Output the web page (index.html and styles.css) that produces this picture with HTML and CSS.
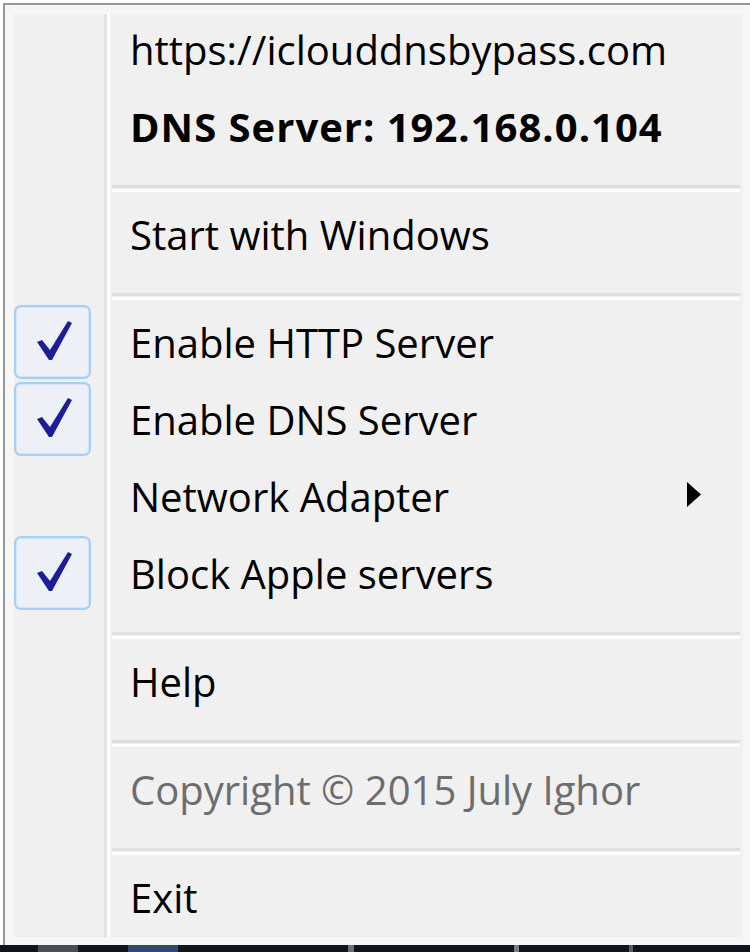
FILE: index.html
```html
<!DOCTYPE html>
<html>
<head>
<meta charset="utf-8">
<link rel="stylesheet" href="styles.css">
</head>
<body>
<div class="screen">
  <div class="frame">
    <div class="menu">
      <div class="row"><span class="label">https://iclouddnsbypass.com</span></div>
      <div class="row"><span class="label bold">DNS Server: 192.168.0.104</span></div>
      <div class="sep"></div>
      <div class="row"><span class="label">Start with Windows</span></div>
      <div class="sep"></div>
      <div class="row checked">
        <span class="box"><svg viewBox="0 0 73 70" width="73" height="70"><polygon class="tick" points="21,35 26,33 34,43 52,14 56,16 36,53 33,53"/></svg></span>
        <span class="label">Enable HTTP Server</span>
      </div>
      <div class="row checked">
        <span class="box"><svg viewBox="0 0 73 70" width="73" height="70"><polygon class="tick" points="21,35 26,33 34,43 52,14 56,16 36,53 33,53"/></svg></span>
        <span class="label">Enable DNS Server</span>
      </div>
      <div class="row">
        <span class="label">Network Adapter</span>
        <svg class="arrow" viewBox="0 0 14 25" width="14" height="25"><polygon points="0,0 14,12.5 0,25"/></svg>
      </div>
      <div class="row checked">
        <span class="box"><svg viewBox="0 0 73 70" width="73" height="70"><polygon class="tick" points="21,35 26,33 34,43 52,14 56,16 36,53 33,53"/></svg></span>
        <span class="label">Block Apple servers</span>
      </div>
      <div class="sep"></div>
      <div class="row"><span class="label">Help</span></div>
      <div class="sep"></div>
      <div class="row"><span class="label disabled">Copyright © 2015 July Ighor</span></div>
      <div class="sep"></div>
      <div class="row"><span class="label">Exit</span></div>
    </div>
  </div>
  <div class="taskbar">
    <span class="tb tb1"></span><span class="tb tb2"></span><span class="tb tb3"></span><span class="tb tb4"></span><span class="tb tb5"></span>
  </div>
</div>
</body>
</html>
```

FILE: styles.css
```css
html, body {
  margin: 0;
  padding: 0;
  background: #ffffff;
}
.screen {
  width: 750px;
  height: 952px;
  display: flex;
  flex-direction: column;
  overflow: hidden;
  background: #ffffff;
}
.frame {
  margin: 3px 0 0 3px;
  border-left: 2px solid #979797;
  border-top: 2px solid #979797;
  background: #f6f6f6;
  padding: 9px 7px 8px 9px;
}
.menu {
  height: 923px;
  overflow: hidden;
  padding-top: 1px;
  box-sizing: border-box;
  background: linear-gradient(to right,
    #f0f0f0 0px, #f0f0f0 90px,
    #e2e3e3 90px, #e2e3e3 93px,
    #ffffff 93px, #ffffff 96px,
    #f0f0f0 96px);
  font-family: "Open Sans", "Noto Sans", sans-serif;
  font-size: 40px;
  color: #000000;
}
.row {
  height: 77px;
  display: flex;
  align-items: flex-start;
}
.label {
  margin-left: 116px;
  padding-top: 7px;
  line-height: normal;
  white-space: nowrap;
}
.bold {
  font-weight: 700;
  letter-spacing: 1px;
}
.disabled {
  color: #6d6d6d;
}
.checked .label {
  margin-left: 39px;
}
.box {
  width: 73px;
  height: 70px;
  margin-top: -3px;
  border: 2px solid #a6cff7;
  border-radius: 7px;
  background: #edf0f6;
  box-shadow: inset 0 0 0 1px #d3e6fa;
  display: flex;
  align-items: center;
  justify-content: center;
}
.box svg {
  display: block;
}
.tick {
  fill: #1d1d98;
}
.arrow {
  margin-left: auto;
  margin-right: 42px;
  margin-top: 20px;
  fill: #000000;
}
.sep {
  height: 31px;
  margin-left: 98px;
  margin-right: 3px;
  background: linear-gradient(to bottom,
    transparent 0px, transparent 16px,
    #dedede 16px, #dedede 19px,
    transparent 19px, transparent 20px,
    #ffffff 20px, #ffffff 23px,
    transparent 23px);
}
.taskbar {
  flex: 1;
  background: #10151c;
  display: flex;
  align-items: stretch;
}
.tb {
  display: block;
  height: 100%;
}
.tb1 { width: 40px; margin-left: 38px; background: #4a4f57; }
.tb2 { width: 50px; margin-left: 50px; background: #2f4a6d; }
.tb3 { width: 6px; margin-left: 170px; background: #6b6f75; }
.tb4 { width: 5px; margin-left: 160px; background: #7a7e84; }
.tb5 { width: 4px; margin-left: 110px; background: #5a5e64; }
```
